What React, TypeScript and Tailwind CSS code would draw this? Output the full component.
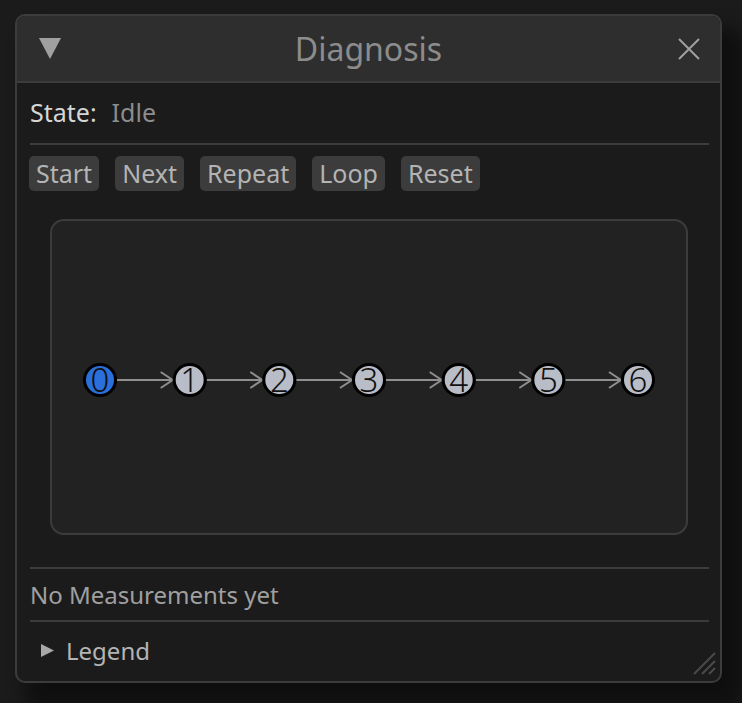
import React from "react";

const nodeX = [100, 189.7, 279.3, 369, 458.7, 548.3, 638];
const nodeY = 380;
const R = 16;

const buttons = ["Start", "Next", "Repeat", "Loop", "Reset"];

function Graph() {
  return (
    <svg
      className="absolute inset-0"
      width={634}
      height={312}
      viewBox="52 221 634 312"
    >
      {nodeX.slice(0, -1).map((x, i) => {
        const x1 = x + R + 1;
        const x2 = nodeX[i + 1] - R - 1;
        return (
          <g key={i} stroke="#8f8f8f" strokeWidth={2} fill="none">
            <line x1={x1} y1={nodeY} x2={x2} y2={nodeY} />
            <polyline
              points={`${x2 - 12},${nodeY - 8} ${x2},${nodeY} ${x2 - 12},${nodeY + 8}`}
            />
          </g>
        );
      })}
      {nodeX.map((x, i) => (
        <g key={i}>
          <circle
            cx={x}
            cy={nodeY}
            r={15.5}
            fill={i === 0 ? "#2a6fdb" : "#b9bdc7"}
            stroke="#000"
            strokeWidth={3}
          />
          <text
            x={x}
            y={nodeY + 12}
            textAnchor="middle"
            fontSize={33}
            fontWeight={300}
            fill="#111"
            style={{ fontFamily: '"Noto Sans", sans-serif' }}
          >
            {i}
          </text>
        </g>
      ))}
    </svg>
  );
}

export default function App() {
  return (
    <div className="w-[742px] h-[703px] bg-[#1b1b1b] pt-[14px] pl-[15px] font-['Noto_Sans',sans-serif] overflow-hidden">
      <div className="relative w-[707px] h-[669px] rounded-[10px] border-2 border-[#3c3c3c] bg-[#1b1b1b] shadow-[16px_20px_18px_6px_rgba(0,0,0,0.45)] flex flex-col overflow-hidden">
        {/* title bar */}
        <div className="h-[67px] shrink-0 bg-[#2e2e2e] border-b-2 border-[#3c3c3c] flex items-center relative">
          <svg
            className="absolute left-[22px] top-[22px]"
            width="22"
            height="21"
            viewBox="0 0 22 21"
          >
            <polygon points="0,0 22,0 11,21" fill="#a0a0a0" />
          </svg>
          <div className="w-full text-center text-[32px] text-[#8c8c8c] leading-none">
            Diagnosis
          </div>
          <svg
            className="absolute left-[661px] top-[22px]"
            width="22"
            height="22"
            viewBox="0 0 22 22"
          >
            <path d="M1 1 L21 21 M21 1 L1 21" stroke="#a0a0a0" strokeWidth="2" />
          </svg>
        </div>

        {/* body */}
        <div className="flex-1 flex flex-col pl-[13px] pr-[11px]">
          <div className="h-[60px] flex items-center gap-[15px] text-[25px]">
            <span className="text-[#d6d6d6]">State:</span>
            <span className="text-[#8c8c8c]">Idle</span>
          </div>
          <div className="h-[2px] bg-[#3c3c3c]" />

          <div className="mt-[11px] -ml-px flex gap-[16px]">
            {buttons.map((b) => (
              <button
                key={b}
                className="h-[35px] px-[7px] rounded-[5px] bg-[#3c3c3c] text-[#b4b4b4] text-[25px] leading-none"
              >
                {b}
              </button>
            ))}
          </div>

          <div className="relative mt-[28px] ml-[20px] w-[638px] h-[316px] rounded-[14px] border-2 border-[#3c3c3c] bg-[#222222]">
            <Graph />
          </div>

          <div className="mt-[32px] h-[2px] bg-[#3c3c3c]" />
          <div className="h-[51px] flex items-center text-[24px] text-[#a0a0a0]">
            No Measurements yet
          </div>
          <div className="h-[2px] bg-[#3c3c3c]" />
          <div className="h-[57px] flex items-center text-[24px] text-[#b4b4b4]">
            <svg
              className="ml-[11px] mr-[12px]"
              width="13"
              height="13"
              viewBox="0 0 13 13"
            >
              <polygon points="0,0 13,6.5 0,13" fill="#a8a8a8" />
            </svg>
            <span>Legend</span>
          </div>
        </div>

        {/* resize grip */}
        <svg
          className="absolute right-[3px] bottom-[5px]"
          width="24"
          height="24"
          viewBox="0 0 24 24"
        >
          <path
            d="M22 1 L1 22 M22 9 L9 22 M22 16 L16 22"
            stroke="#4a4a4a"
            strokeWidth="2"
          />
        </svg>
      </div>
    </div>
  );
}
